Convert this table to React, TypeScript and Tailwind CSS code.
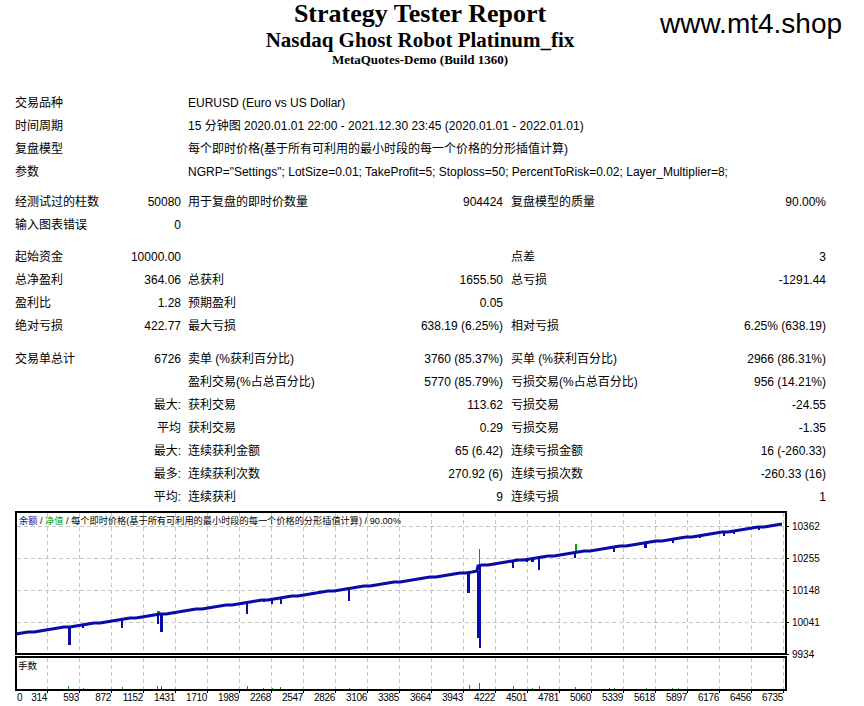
const labels = [
  "0", "314", "593", "872", "1152", "1431", "1710", "1989", "2268", "2547", "2826", "3106", "3385",
  "3664", "3943", "4222", "4501", "4781", "5060", "5339", "5618", "5897", "6176", "6456", "6735",
]

const yLevels = [
  { y: 526, v: "10362" },
  { y: 558, v: "10255" },
  { y: 590, v: "10148" },
  { y: 622, v: "10041" },
  { y: 654, v: "9934" },
]

// balance drops [x, bottom y, width]
const drops: [number, number, number][] = [
  [68, 645, 3], [82, 628, 2], [121, 628, 2], [157, 624, 2], [160, 632, 3], [246, 614, 2],
  [263, 602, 2], [271, 604, 2], [280, 604, 2], [348, 601, 2], [467, 593, 3], [477, 638, 3],
  [479, 648, 2], [512, 568, 2], [526, 562, 2], [531, 562, 3], [538, 570, 2], [574, 558, 2],
  [613, 552, 2], [644, 548, 3], [672, 543, 2], [699, 538, 2], [723, 536, 2], [733, 534, 2], [758, 530, 2],
]

// equity spikes [x, top y, width]
const ups: [number, number, number][] = [
  [157, 611, 3], [479, 549, 1], [575, 544, 2], [672, 538, 1],
]

// lot ticks [x, height]
const lots: [number, number][] = [
  [68, 3], [83, 1], [122, 2], [157, 3], [161, 3], [247, 3], [263, 1], [272, 1], [280, 2], [349, 1],
  [469, 4], [479, 6], [513, 3], [532, 1], [539, 3], [575, 2], [609, 1], [614, 1], [646, 1], [672, 1], [678, 1],
]

function baseY(x: number) {
  return x < 478 ? 634 - (x - 16) * 0.1365 : 566 - (x - 478) * 0.1377
}

function balancePoints() {
  const xs: number[] = []
  for (let x = 16; x < 477; x += 6) xs.push(x)
  xs.push(477, 478)
  for (let x = 482; x <= 784; x += 6) xs.push(x)
  return xs.map((x) => `${x},${Math.round(baseY(x))}`).join(" ")
}

const grid = Array.from({ length: 24 }, (_, i) => 47 + 32 * i)

function Chart() {
  const font = "'Liberation Sans','Noto Sans CJK SC',sans-serif"
  return (
    <svg width={864} height={199} viewBox="0 507 864 199" className="block">
      {grid.map((x) => (
        <g key={x} stroke="#c4c4c4" strokeDasharray="4 3">
          <line x1={x + 0.5} y1={513} x2={x + 0.5} y2={653} />
          <line x1={x + 0.5} y1={658} x2={x + 0.5} y2={689} />
        </g>
      ))}
      {yLevels.slice(0, 4).map((l) => (
        <line key={l.y} x1={17} y1={l.y + 0.5} x2={785} y2={l.y + 0.5} stroke="#c4c4c4" strokeDasharray="4 3" />
      ))}

      {ups.map(([x, top, w]) => (
        <rect key={"u" + x} x={x} y={top} width={w} height={baseY(x) - top} fill="#00a000" />
      ))}
      <polyline points={balancePoints()} fill="none" stroke="#0a0aa8" strokeWidth={3} />
      {drops.map(([x, bottom, w]) => (
        <rect key={"d" + x} x={x} y={baseY(x)} width={w} height={bottom - baseY(x)} fill="#0a0aa8" />
      ))}
      {lots.map(([x, h]) => (
        <rect key={"l" + x} x={x} y={689 - h} width={1} height={h} fill="#00a000" />
      ))}

      <rect x={16} y={512} width={770} height={142} fill="none" stroke="#000" strokeWidth={2} />
      <rect x={16} y={657} width={770} height={33} fill="none" stroke="#000" strokeWidth={2} />

      {yLevels.map((l) => (
        <g key={"t" + l.y}>
          <line x1={786} y1={l.y + 0.5} x2={789} y2={l.y + 0.5} stroke="#000" />
          <text x={792} y={l.y + 4} fontSize={10} fontFamily={font} fill="#000">
            {l.v}
          </text>
        </g>
      ))}
      {grid.map((x) => (
        <line key={"b" + x} x1={x + 0.5} y1={690} x2={x + 0.5} y2={693} stroke="#000" />
      ))}
      {labels.map((t, i) =>
        i === 0 ? (
          <text key={t} x={17} y={701} fontSize={10} fontFamily={font} fill="#000">
            {t}
          </text>
        ) : (
          <text key={t} x={15 + 32 * i} y={701} fontSize={10} fontFamily={font} fill="#000" textAnchor="end" letterSpacing={-0.3}>
            {t}
          </text>
        ),
      )}

      <text x={19} y={524} fontSize={9.2} fontFamily={font} fill="#000">
        <tspan fill="#1010a0">余额</tspan> / <tspan fill="#00a000">净值</tspan> / 每个即时价格(基于所有可利用的最小时段的每一个价格的分形插值计算) / 90.00%
      </text>
      <text x={18} y={669} fontSize={9.5} fontFamily={font} fill="#000">
        手数
      </text>
    </svg>
  )
}

type Cells = [string, string, string, string, string, string]

function Row({ c }: { c: Cells }) {
  return (
    <div className="grid h-[23px] grid-cols-[96px_70px_210px_112px_208px_115px] whitespace-nowrap leading-[23px]">
      <div>{c[0]}</div>
      <div className="text-right">{c[1]}</div>
      <div className="pl-[7px]">{c[2]}</div>
      <div className="text-right">{c[3]}</div>
      <div className="pl-[8px]">{c[4]}</div>
      <div className="text-right">{c[5]}</div>
    </div>
  )
}

function WideRow({ label, value }: { label: string; value: string }) {
  return (
    <div className="grid h-[23px] grid-cols-[96px_70px_210px_112px_208px_115px] whitespace-nowrap leading-[23px]">
      <div>{label}</div>
      <div className="col-span-5 pl-[77px]">{value}</div>
    </div>
  )
}

export default function App() {
  return (
    <div className="relative h-[706px] w-[864px] overflow-hidden bg-white text-black">
      <header className="h-[92px] w-[840px] text-center font-['Liberation_Serif',serif] font-bold">
        <h1 className="text-[26px] leading-[28px]">Strategy Tester Report</h1>
        <h2 className="text-[21px] leading-[24px]">Nasdaq Ghost Robot Platinum_fix</h2>
        <p className="text-[13px] leading-[16px]">MetaQuotes-Demo (Build 1360)</p>
      </header>
      <div className="absolute left-[660px] top-[8px] font-['Liberation_Sans',sans-serif] text-[28px] leading-[32px]">
        www.mt4.shop
      </div>

      <div className="ml-[15px] font-['Liberation_Sans','Noto_Sans_CJK_SC',sans-serif] text-[12px]">
        <WideRow label="交易品种" value="EURUSD (Euro vs US Dollar)" />
        <WideRow label="时间周期" value="15 分钟图 2020.01.01 22:00 - 2021.12.30 23:45 (2020.01.01 - 2022.01.01)" />
        <WideRow label="复盘模型" value="每个即时价格(基于所有可利用的最小时段的每一个价格的分形插值计算)" />
        <WideRow
          label="参数"
          value='NGRP="Settings"; LotSize=0.01; TakeProfit=5; Stoploss=50; PercentToRisk=0.02; Layer_Multiplier=8;'
        />
        <div className="h-[7px]" />
        <Row c={["经测试过的柱数", "50080", "用于复盘的即时价数量", "904424", "复盘模型的质量", "90.00%"]} />
        <Row c={["输入图表错误", "0", "", "", "", ""]} />
        <div className="h-[9px]" />
        <Row c={["起始资金", "10000.00", "", "", "点差", "3"]} />
        <Row c={["总净盈利", "364.06", "总获利", "1655.50", "总亏损", "-1291.44"]} />
        <Row c={["盈利比", "1.28", "预期盈利", "0.05", "", ""]} />
        <Row c={["绝对亏损", "422.77", "最大亏损", "638.19 (6.25%)", "相对亏损", "6.25% (638.19)"]} />
        <div className="h-[10px]" />
        <Row c={["交易单总计", "6726", "卖单 (%获利百分比)", "3760 (85.37%)", "买单 (%获利百分比)", "2966 (86.31%)"]} />
        <Row c={["", "", "盈利交易(%占总百分比)", "5770 (85.79%)", "亏损交易(%占总百分比)", "956 (14.21%)"]} />
        <Row c={["", "最大:", "获利交易", "113.62", "亏损交易", "-24.55"]} />
        <Row c={["", "平均", "获利交易", "0.29", "亏损交易", "-1.35"]} />
        <Row c={["", "最大:", "连续获利金额", "65 (6.42)", "连续亏损金额", "16 (-260.33)"]} />
        <Row c={["", "最多:", "连续获利次数", "270.92 (6)", "连续亏损次数", "-260.33 (16)"]} />
        <Row c={["", "平均:", "连续获利", "9", "连续亏损", "1"]} />
      </div>

      <div className="-mt-[2px]">
        <Chart />
      </div>
    </div>
  )
}
